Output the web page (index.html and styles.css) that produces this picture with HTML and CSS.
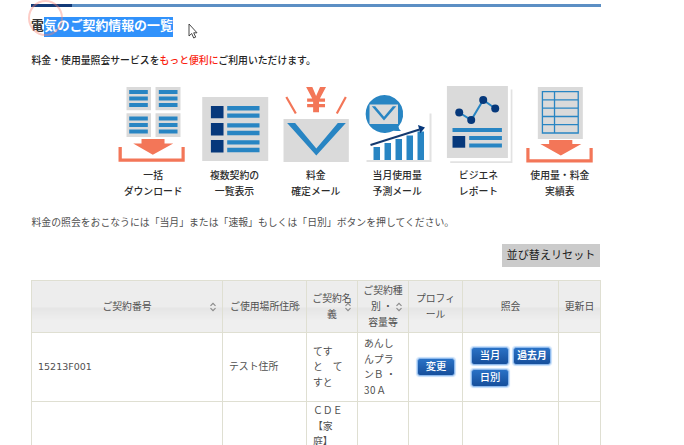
FILE: index.html
```html
<!DOCTYPE html>
<html lang="ja">
<head>
<meta charset="utf-8">
<title>電気のご契約情報の一覧</title>
<link rel="stylesheet" href="styles.css">
</head>
<body>
<main class="page">
  <h1 class="title">電<span class="selected">気のご契約情報の一覧</span></h1>
  <p class="lead">料金・使用量照会サービスを<em>もっと便利に</em>ご利用いただけます。</p>

  <ul class="services">
    <li>
      <svg viewBox="112.5 84 81.3 80">
        <path class="paper" d="M126 87h24.5v23.3H126zM155 87h25v23.3h-25zM126 113.3h24.5V137H126zM155 113.3h25V137h-25z"/>
        <path class="rule" d="M128.7 92H147.3M128.7 98.6H147.3M128.7 105H147.3M158.3 92H177M158.3 98.6H177M158.3 105H177M128.7 118.4H147.3M128.7 125H147.3M128.7 131.5H147.3M158.3 118.4H177M158.3 125H177M158.3 131.5H177"/>
        <path class="coral" d="M141 139h23v4.5h8.7L152.3 154.7 132.7 143.5H141zM118 147h3.3v11.5H181V147h3.2v14.7H118z"/>
      </svg>
      一括<br>ダウンロード
    </li>
    <li>
      <svg viewBox="193.8 84 81.3 80">
        <path class="paper" d="M202 97h66v64h-66z"/>
        <path class="navy" d="M210.7 106h12.6v12.3h-12.6zM210.7 123h12.6v12.5h-12.6zM210.7 140h12.6v12.5h-12.6z"/>
        <path class="rule wide" d="M227 108.3H259.3M227 115.6H259.3M227 125.4H259.3M227 133H259.3M227 142.4H259.3M227 150H259.3"/>
      </svg>
      複数契約の<br>一覧表示
    </li>
    <li>
      <svg viewBox="275.2 84 81.3 80">
        <path class="paper" d="M283.7 119H349v43h-65.3z"/>
        <path class="blue" d="M287.3 123h8L316.5 148.5 338 123h8L316.5 155.5z"/>
        <path class="coral-line" d="M286.5 97l9.5 16.5M346 97l-9 16.5"/>
        <path class="coral" d="M306.3 87h6.2l3.8 9 3.900-9h6l-6.100 11.500h5.100v3.200h-6v2.300h6v3.300h-6v5h-5.900v-5h-6v-3.300h6v-2.300h-6v-3.200h5.100z"/>
      </svg>
      料金<br>確定メール
    </li>
    <li>
      <svg viewBox="356.5 84 81.3 80">
        <path class="shade" d="M366 160h63v-46.5h2v48.5h-65z"/>
        <path class="blue" d="M373 147h6.5v13H373zM384 143h6.5v17H384zM395 139h6.5v21H395zM406 135.5h6.5V160H406zM417 131.5h6.5V160H417z"/>
        <path class="blue" d="M384 95a19 19 0 1 0 9 35.8q3.5.2 7.5.2-2.5-1.7-2.5-4.5A19 19 0 0 0 384 95z"/>
        <path class="paper" d="M369 104.5h28.5V124H369z"/>
        <path class="blue" d="M371.3 106.2h3.4l8.800 10.600 8.800-10.600h3.500l-12.300 14.300z"/>
        <path class="navy-line" d="M370 145l49-15.5"/>
        <path class="navy" d="M417.500 125l7 2.500-4.800 5.700z"/>
      </svg>
      当月使用量<br>予測メール
    </li>
    <li>
      <svg viewBox="437.8 84 81.3 80">
        <path class="paper" d="M446.7 86h61v72h-61z"/>
        <path class="shade" d="M510.5 89.5h1.7V163H450v-1.7h60.500z"/>
        <path class="trend" d="M459 112.5l12 7.5 12-20 12 8.5"/>
        <g class="navy"><circle cx="459" cy="112.5" r="4"/><circle cx="471" cy="120" r="4"/><circle cx="483" cy="100" r="4"/><circle cx="495" cy="108.5" r="4"/></g>
        <path class="rule" d="M452.3 129.900H501.700M469 138H501.700M469 145.400H501.700"/>
        <path class="navy" d="M452.3 136h12.700v11.700h-12.700z"/>
      </svg>
      ビジエネ<br>レポート
    </li>
    <li>
      <svg viewBox="519.2 84 81.3 80">
        <path class="paper" d="M538 87h45v52h-45z"/>
        <path class="cells" d="M542.6 91.600h35.800V133h-35.800zM554.700 91.600V133M542.600 99.800h35.800M542.600 108.200h35.800M542.600 116.500h35.800M542.600 124.700h35.800"/>
        <path class="coral" d="M549.3 140h23.200v4h9L561 155.500 540.500 144h8.800zM526.500 148h3.200v11.200h60V148h3.200v14.500h-66.400z"/>
      </svg>
      使用量・料金<br>実績表
    </li>
  </ul>

  <p class="guide">料金の照会をおこなうには「当月」または「速報」もしくは「日別」ボタンを押してください。</p>

  <div class="toolbar"><button class="reset">並び替えリセット</button></div>

  <table class="contracts">
    <colgroup><col class="c-number"><col class="c-address"><col class="c-name"><col class="c-plan"><col class="c-profile"><col class="c-inquiry"><col class="c-updated"></colgroup>
    <thead>
      <tr>
        <th>ご契約番号<svg class="sort" viewBox="0 0 8 10"><path d="M1.5 3.800L4 1.300 6.500 3.800M1.500 6.200L4 8.700 6.500 6.200"/></svg></th>
        <th>ご使用場所住所<svg class="sort" viewBox="0 0 8 10"><path d="M1.5 3.800L4 1.300 6.500 3.800M1.500 6.200L4 8.700 6.500 6.200"/></svg></th>
        <th>ご契約名<br>義<svg class="sort" viewBox="0 0 8 10"><path d="M1.5 3.800L4 1.300 6.500 3.800M1.500 6.200L4 8.700 6.500 6.200"/></svg></th>
        <th>ご契約種<br>別 ・&nbsp;<br>容量等<svg class="sort" viewBox="0 0 8 10"><path d="M1.5 3.800L4 1.300 6.500 3.800M1.500 6.200L4 8.700 6.500 6.200"/></svg></th>
        <th>プロフィ<br>ール</th>
        <th>照会</th>
        <th>更新日</th>
      </tr>
    </thead>
    <tbody>
      <tr>
        <td class="number">15213F001</td>
        <td>テスト住所</td>
        <td>てす<br>と　て<br>すと</td>
        <td>あんし<br>んプラ<br>ンＢ ・<br><span class="amp">30Ａ</span></td>
        <td><div class="actions"><button class="btn">変更</button></div></td>
        <td><div class="actions"><button class="btn">当月</button><button class="btn heavy">過去月</button><button class="btn">日別</button></div></td>
        <td></td>
      </tr>
      <tr>
        <td></td><td></td>
        <td class="top">ＣＤＥ<br>【家<br>庭】</td>
        <td></td><td></td><td></td><td></td>
      </tr>
    </tbody>
  </table>
</main>
<div class="click-ring"></div>
<svg class="cursor" viewBox="0 0 10 16"><path d="M1 1v12l2.7-2.5 2 4.5 2-.9-2-4.3H9z"/></svg>
</body>
</html>
```
FILE: styles.css
```css
* { box-sizing: border-box; }

body {
  margin: 0;
  height: 445px;
  overflow: hidden;
  position: relative;
  background: #fff;
  color: #505050;
  font: 9.85px/15.6px "Noto Sans CJK JP", sans-serif;
}

.page {
  width: 570px;
  height: 445px;
  overflow: hidden;
  margin-left: 31px;
  padding-top: 4px;
}

.page::before {
  content: "";
  display: block;
  height: 2.5px;
  background: linear-gradient(90deg, #123a78 41px, #5c8fc4 41px);
}

.title {
  display: flex;
  margin: 10.5px 0 0;
  height: 20px;
  color: #333;
  font-size: 12.9px;
  line-height: 16px;
  font-weight: 700;
}

.selected {
  background: #3192fb;
  color: #fff;
}

.lead {
  margin: 16px 0 0;
  padding-left: .5px;
  color: #222;
  font-weight: 500;
}

.lead em {
  color: #fa1e10;
  font-style: normal;
}

.services {
  display: grid;
  grid-template-columns: repeat(6, 1fr);
  width: 488px;
  margin: 15.400px 0 0 81.500px;
  padding: 0;
  list-style: none;
  color: #2c2c2c;
  font-weight: 500;
  text-align: center;
}

.services svg {
  display: block;
  width: 100%;
  height: 80px;
  margin-bottom: 4px;
}

.paper { fill: #dadada; }
.shade { fill: #e2e2e2; }
.blue { fill: #2885c3; }
.navy { fill: #06387b; }
.coral { fill: #f37658; }
.rule { stroke: #2885c3; stroke-width: 4; }
.rule.wide { stroke-width: 4.4; }
.coral-line { stroke: #f37658; stroke-width: 2.2; }
.navy-line { stroke: #143a70; stroke-width: 2; }
.trend { fill: none; stroke: #2885c3; stroke-width: 2; }
.cells { fill: none; stroke: #2885c3; stroke-width: 1.3; }

.guide { margin: 15.5px 0 0; padding-left: .5px; }

.toolbar {
  display: flex;
  justify-content: flex-end;
  margin-top: 14px;
}

.reset {
  width: 98px;
  height: 23px;
  margin-right: 1px;
  padding: 0 0 3px;
  border: 0;
  background: #cbcbcb;
  color: #222;
  font: 11.1px/20px "Noto Sans CJK JP", sans-serif;
}

.contracts {
  width: 570px;
  margin-top: 13px;
  border-collapse: collapse;
  table-layout: fixed;
}

.c-number { width: 191px; }
.c-address { width: 84px; }
.c-name { width: 51px; }
.c-plan { width: 51px; }
.c-profile { width: 54px; }
.c-inquiry { width: 96px; }
.c-updated { width: 42px; }

.contracts th,
.contracts td {
  border: 1px solid #dfdfd2;
  white-space: nowrap;
}

.contracts th {
  position: relative;
  height: 52px;
  padding: 0;
  background: linear-gradient(#ededed 50%, #e5e5e5 52%, #efefef 78%);
  font-weight: 400;
}

.contracts td {
  height: 69px;
  padding: 0 6px;
}

.contracts .number { font-family: "DejaVu Sans", sans-serif; font-size: 9.5px; }
.contracts .top { vertical-align: top; padding-top: 1px; }
.amp { letter-spacing: .6px; }

.sort {
  position: absolute;
  top: 21px;
  right: 5px;
  width: 8px;
  height: 10px;
  fill: none;
  stroke: #8c8c8c;
  stroke-width: 1.2;
}

.actions {
  display: flex;
  flex-wrap: wrap;
  gap: 4px;
  padding-left: 2px;
}

.btn {
  width: 38px;
  height: 18px;
  padding: 0 0 2px;
  border: 1px solid #8db9ed;
  border-radius: 3px;
  background: linear-gradient(#2a72c6, #164f9c);
  box-shadow: 0 0 1px 1px #c5defa;
  color: #fff;
  font: 500 10.3px/14px "Noto Sans CJK JP", sans-serif;
}

.btn.heavy { font-weight: 700; font-size: 9.8px; }

.click-ring {
  position: absolute;
  left: 28px;
  top: 0;
  width: 35px;
  height: 36px;
  border: 2.5px solid rgba(250, 130, 115, .4);
  border-radius: 50%;
}

.cursor {
  position: absolute;
  left: 187.5px;
  top: 23px;
  width: 10px;
  height: 16px;
  fill: #fff;
  stroke: #333;
  stroke-width: .9;
}
```
